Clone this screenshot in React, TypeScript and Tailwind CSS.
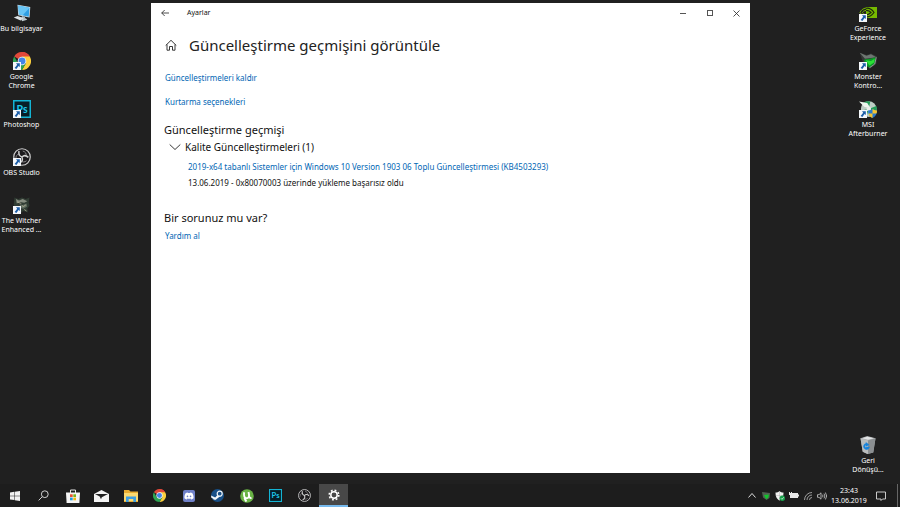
import { useState, type ReactNode } from 'react'
import { FaDiscord } from 'react-icons/fa'

const Chrome = ({ className }: { className?: string }) => (
  <svg viewBox="0 0 24 24" className={className}>
    <path d="M12 12 1.6 6A12 12 0 0 1 22.4 6Z" fill="#e0483a" />
    <path d="M12 0a12 12 0 0 1 10.4 6H12Z" fill="#e0483a" />
    <path d="M22.4 6A12 12 0 0 1 12 24l5.2-9L12 6Z" fill="#fbcf3c" />
    <path d="M1.6 6A12 12 0 0 0 12 24l5.2-9H6.8Z" fill="#2da453" />
    <circle cx="12" cy="12" r="5.8" fill="#f4f4f4" />
    <circle cx="12" cy="12" r="4.6" fill="#4285e8" />
  </svg>
)

const Photoshop = ({ className }: { className?: string }) => (
  <svg viewBox="0 0 24 24" className={className}>
    <rect x="1" y="1" width="22" height="22" fill="#071e27" stroke="#14b4d4" strokeWidth="2" />
    <text x="12" y="17" textAnchor="middle" fontSize="14" fontWeight="700" fontFamily="Lato, sans-serif" fill="#1cc8ec">
      Ps
    </text>
  </svg>
)

const Obs = ({ className }: { className?: string }) => (
  <svg viewBox="0 0 24 24" className={className} fill="none" stroke="#cfcfcf">
    <circle cx="12" cy="12" r="11" fill="#1c1a1d" strokeWidth="1.6" />
    <path d="M8 4c-.8 4 1 7 4 8M20.5 12.5c-3-2.8-6.3-2.8-8.5-.5M8.5 20c3.5-1.3 4.7-4.6 3.5-8" strokeWidth="2" />
    <path d="M13 4c3.5 1 5 3.5 4.5 6M18 17c-2.6 2.2-5.2 2-7.2.5M4 14c-.5-3 1.2-5.3 4-6" strokeWidth="0.8" />
  </svg>
)

const Computer = ({ className }: { className?: string }) => (
  <svg viewBox="0 0 24 24" className={className}>
    <path d="m6 1 17 3-1 14-15-3Z" fill="#d5e4ec" />
    <path d="m7 2 15 3-1 12-13-3Z" fill="#2f9fe4" />
    <path d="m7 2 15 3-9 10-5-1Z" fill="#69c5f5" />
    <path d="m12 16 4 1v3l-5-1Z" fill="#aab7be" />
    <path d="m1 18 5-2 9 3-5 3Z" fill="#dde3e6" />
    <path d="m11 20 6-1 2 2-7 2Z" fill="#bfc9ce" />
  </svg>
)

const Witcher = ({ className }: { className?: string }) => (
  <svg viewBox="0 0 24 24" className={className}>
    <path d="m2 2 5 2 5-2 5 2 5-2-1 6 1 5-3 4 1 5-6-2-3 2-4-3-4 1-2-9Z" fill="#303c33" />
    <path d="m4 4 4 2 5-2 6 3-4 2-6-1-4 2Z" fill="#868d80" />
    <path d="m9 11 4 1 5-2 1 4-5 3-4-1Z" fill="#5e6c5f" />
    <path d="m12 13 2 1 3-2M6 8l5 2M15 18l3 2" stroke="#bcb79a" fill="none" />
  </svg>
)

const MonsterHead = ({ className }: { className?: string }) => (
  <svg viewBox="0 0 24 24" className={className}>
    <path d="m1 1 9 3 6-2 8 4-1 10-8 6-8-4-3-8Z" fill="#343836" />
    <path d="m1 1 9 4 6-2 7 4-7 1-8 1Z" fill="#6e7672" />
    <path d="m7 10 8-1 7-2-1 8-7 6-6-4Z" fill="#099a25" />
    <path d="m9 11 7 1 5-3-1 5-6 4Z" fill="#2be036" />
    <path d="m23 7-2 9-7 5" stroke="#b0b6b2" fill="none" />
  </svg>
)

const Afterburner = ({ className }: { className?: string }) => (
  <svg viewBox="0 0 24 24" className={className}>
    <circle cx="13" cy="12" r="10.5" fill="#bdcdc4" />
    <path d="M13 12 5 4a11 11 0 0 1 10-2ZM13 12l10-4a11 11 0 0 1 0 8ZM13 12l-3 10a11 11 0 0 1-7-8Z" fill="#249d58" />
    <path d="m0 2 11 2 5 8-9-3Z" fill="#eef6ef" />
    <circle cx="13" cy="12" r="3" fill="#e9efeb" />
    <path d="M12 14c3 0 5-1 6-2 2 1 3 2 6 2 0 5-2 8-6 10-4-2-6-5-6-10Z" fill="#2879cf" />
    <path d="M18 12c2 1 3 2 6 2 0 2 0 3-1 4h-5v6c-3-1-5-3-5-6h5Z" fill="#f4c431" />
  </svg>
)

const Nvidia = ({ className }: { className?: string }) => (
  <svg viewBox="0 0 18 18" className={className}>
    <path d="M7 3h11v11H7Z" fill="#76b900" />
    <path d="M6 4.5c4-1 7 1 9 4-3 4-6 5-9 4M6 6.5c3-.5 4.5.5 6 2-2 2-3.5 3-6 2" fill="none" stroke="#1c2a0c" strokeWidth="1.2" />
    <path d="M7 4C4 4.5 2 6 1 8.5c1 2 3 3.5 6 4M7 6.5C5 6.5 4 7.5 3.5 8.5c.5 1.2 1.5 2 3.5 2" fill="none" stroke="#76b900" />
  </svg>
)

const RecycleBin = ({ className }: { className?: string }) => (
  <svg viewBox="0 0 24 24" className={className}>
    <path d="m2 3 9-3 11 3-3 19-8 2-6-3Z" fill="#a9acae" />
    <path d="m2 3 10 3v18l-7-3Z" fill="#b9bcbd" />
    <path d="m4 3 7-2 9 2-8 2Z" fill="#e2e4e5" />
    <path d="m22 3-3 19-7 2V6Z" fill="#8b8f91" />
    <path d="M11 11a3 3 0 1 0 1.5 4.5h-3" fill="none" stroke="#1683dc" strokeWidth="2.4" />
    <path d="m9 8 5 4-5 2Z" fill="#1683dc" />
  </svg>
)

const ShortcutArrow = () => (
  <svg viewBox="0 0 8 8" className="absolute bottom-0 left-0 size-2">
    <path d="M0 0h8v8H0Z" fill="#f5f8fb" />
    <path d="M3 1.3h3.8v3.8L5.5 4 3.4 6.9 1.6 6 4.2 2.7Z" fill="#1c5ea8" />
  </svg>
)

type Shortcut = { lines: string[]; icon: ReactNode; shortcut?: boolean }

const leftIcons: Shortcut[] = [
  { lines: ['Bu bilgisayar'], icon: <Computer className="size-full" /> },
  { lines: ['Google', 'Chrome'], icon: <Chrome className="size-full" />, shortcut: true },
  { lines: ['Photoshop'], icon: <Photoshop className="size-full" />, shortcut: true },
  { lines: ['OBS Studio'], icon: <Obs className="size-full" />, shortcut: true },
  { lines: ['The Witcher', 'Enhanced ...'], icon: <Witcher className="size-full" />, shortcut: true },
]

const rightIcons: Shortcut[] = [
  { lines: ['GeForce', 'Experience'], icon: <Nvidia className="size-full" />, shortcut: true },
  { lines: ['Monster', 'Kontro...'], icon: <MonsterHead className="size-full" />, shortcut: true },
  { lines: ['MSI', 'Afterburner'], icon: <Afterburner className="size-full" />, shortcut: true },
]

function DesktopIcon({ lines, icon, shortcut }: Shortcut) {
  return (
    <button className="flex h-12 w-full flex-col items-center gap-0.5 pt-1 text-[7px] leading-[9px] text-white">
      <span className="relative block size-[18px] shrink-0">
        {icon}
        {shortcut && <ShortcutArrow />}
      </span>
      <span className="whitespace-nowrap">
        {lines.map((line) => (
          <span key={line} className="block">
            {line}
          </span>
        ))}
      </span>
    </button>
  )
}

function SettingsWindow() {
  const [open, setOpen] = useState(true)

  return (
    <main className="mt-[3px] mb-[11px] flex flex-1 flex-col bg-white text-[#111]">
      <header className="flex h-5 items-center">
        <button aria-label="Geri" className="flex w-7 justify-center">
          <svg viewBox="0 0 8 8" className="size-2" fill="none" stroke="#222" strokeWidth="0.8">
            <path d="M8 4H.7M3.7 1l-3 3 3 3" />
          </svg>
        </button>
        <span className="ml-2 text-[7px]">Ayarlar</span>
        <div className="ml-auto flex">
          <button aria-label="Simge durumuna küçült" className="flex h-5 w-[27px] items-center justify-center">
            <span className="h-px w-1.5 bg-[#555]" />
          </button>
          <button aria-label="Ekranı kapla" className="flex h-5 w-[27px] items-center justify-center">
            <span className="size-1.5 border border-[#555]" />
          </button>
          <button aria-label="Kapat" className="flex h-5 w-[27px] items-center justify-center">
            <svg viewBox="0 0 7 7" className="size-[7px]" stroke="#222" strokeWidth="0.8">
              <path d="m.5.5 6 6m0-6-6 6" />
            </svg>
          </button>
        </div>
      </header>

      <div className="px-[13px] pt-2.5">
        <div className="flex h-6 items-center gap-3">
          <button aria-label="Giriş" className="ml-px">
            <svg viewBox="0 0 12 12" className="size-3" fill="none" stroke="#222" strokeWidth="0.9">
              <path d="M.7 6.5 6 1.3l5.3 5.2M2 5.5v5.7h2.5V7.5h3v3.7H10V5.5" />
            </svg>
          </button>
          <h1 className="text-[15px] leading-6 text-[#222]">Güncelleştirme geçmişini görüntüle</h1>
        </div>

        <nav className="mt-[13px] ml-px flex flex-col items-start gap-2 text-[8px] leading-4 text-[#0066b4]">
          <a href="#kaldir">Güncelleştirmeleri kaldır</a>
          <a href="#kurtarma">Kurtarma seçenekleri</a>
        </nav>

        <section className="mt-3">
          <h2 className="text-[11px] leading-4">Güncelleştirme geçmişi</h2>
          <button
            aria-expanded={open}
            onClick={() => setOpen(!open)}
            className="mt-px ml-[5px] flex items-center gap-1 text-[10px] leading-4"
          >
            <svg viewBox="0 0 12 12" className="size-3" fill="none" stroke="#222" strokeWidth="0.9">
              <path d="m.7 3.5 5.3 5 5.3-5" />
            </svg>
            Kalite Güncelleştirmeleri (1)
          </button>
          {open && (
            <div className="mt-1 ml-6 text-[8px] leading-4">
              <a href="#kb4503293" className="block text-[#0066b4]">
                2019-x64 tabanlı Sistemler için Windows 10 Version 1903 06 Toplu Güncelleştirmesi (KB4503293)
              </a>
              <p>13.06.2019 - 0x80070003 üzerinde yükleme başarısız oldu</p>
            </div>
          )}
        </section>

        <section className="mt-[19px]">
          <h2 className="text-[11px] leading-4">Bir sorunuz mu var?</h2>
          <a href="#yardim" className="mt-0.5 ml-px block text-[8px] leading-4 text-[#0066b4]">
            Yardım al
          </a>
        </section>
      </div>
    </main>
  )
}

const taskbarApps: { name: string; icon: ReactNode; active?: boolean }[] = [
  {
    name: 'Başlat',
    icon: (
      <svg viewBox="0 0 10 10" className="size-2.5" fill="#f2f2f2">
        <path d="M0 1.4 4.3.8v3.9H0ZM4.8.7 10 0v4.7H4.8ZM0 5.2h4.3v3.9L0 8.5ZM4.8 5.2H10V10l-5.2-.8Z" />
      </svg>
    ),
  },
  {
    name: 'Ara',
    icon: (
      <svg viewBox="0 0 11 11" className="size-[11px]" fill="none" stroke="#d0d0d0">
        <circle cx="6.8" cy="4.2" r="3.4" />
        <path d="M4.3 6.7.6 10.4" />
      </svg>
    ),
  },
  {
    name: 'Microsoft Store',
    icon: (
      <svg viewBox="0 0 14 14" className="size-3.5">
        <path d="M4.5 4V1h5v3" fill="none" stroke="#e8e8e8" />
        <path d="M0 3.5h14L13.4 14H.6Z" fill="#f4f4f4" />
        <path d="M4 5.3h2.7V8H4Z" fill="#e8502e" />
        <path d="M7.3 5.3H10V8H7.3Z" fill="#78b41c" />
        <path d="M4 8.6h2.7v2.7H4Z" fill="#1c9be0" />
        <path d="M7.3 8.6H10v2.7H7.3Z" fill="#f5b813" />
      </svg>
    ),
  },
  {
    name: 'Posta',
    icon: (
      <svg viewBox="0 0 15 12" className="h-3 w-[15px]">
        <path d="M0 4 7.5 0 15 4v8H0Z" fill="#f5f5f5" />
        <path d="M1 4h13L7.8 7.3l-.8 2-1.3-2.8Z" fill="#202020" />
      </svg>
    ),
  },
  {
    name: 'Dosya Gezgini',
    icon: (
      <svg viewBox="0 0 14 12" className="h-3 w-3.5">
        <path d="M0 0h5l1.5 1.5H14V12H0Z" fill="#e9ad32" />
        <path d="M0 3h14v8H0Z" fill="#fbd970" />
        <path d="M2 6.5h10V12H9.3V9H4.7v3H2Z" fill="#3e9fe0" />
      </svg>
    ),
  },
  { name: 'Google Chrome', icon: <Chrome className="size-[13px]" /> },
  {
    name: 'Discord',
    icon: (
      <span className="flex size-3 items-center justify-center rounded-xs bg-[#6f80c8]">
        <FaDiscord className="size-2.5 text-white" />
      </span>
    ),
  },
  {
    name: 'Steam',
    icon: (
      <svg viewBox="0 0 13 13" className="size-[13px]">
        <circle cx="6.5" cy="6.5" r="6.5" fill="#174f87" />
        <path d="m0 6.5 4.2 2 3-3.2 2 2-3.6 2.6A2 2 0 0 1 2 9.5L.4 8.8Z" fill="#f3f6f8" />
        <circle cx="8.7" cy="4.7" r="2.5" fill="#174f87" stroke="#f3f6f8" strokeWidth="1.2" />
      </svg>
    ),
  },
  {
    name: 'µTorrent',
    icon: (
      <svg viewBox="0 0 14 14" className="size-3.5">
        <circle cx="7" cy="7" r="6.8" fill="#69b345" />
        <path
          d="M4.2 3.2c-.6 3 0 6 2.3 6 2 0 2.8-1.5 2.5-3.5L8.5 3M9 6.5c.2 2 1 2.8 2.5 2.5M4.5 8.5c.3 2 1 3 2 4"
          fill="none"
          stroke="#fff"
          strokeWidth="1.9"
        />
      </svg>
    ),
  },
  { name: 'Photoshop', icon: <Photoshop className="size-[13px]" /> },
  { name: 'OBS Studio', icon: <Obs className="size-[13px]" /> },
  {
    name: 'Ayarlar',
    active: true,
    icon: (
      <svg viewBox="0 0 12 12" className="size-3" fill="none" stroke="#fff">
        <circle cx="6" cy="6" r="3.2" strokeWidth="1.5" />
        <circle cx="6" cy="6" r="4.8" strokeWidth="1.6" strokeDasharray="1.8 1.97" />
      </svg>
    ),
  },
]

function Taskbar() {
  return (
    <footer className="flex h-[23px] items-stretch bg-[#1d1d1d] text-white">
      {taskbarApps.map((app) => (
        <button
          key={app.name}
          aria-label={app.name}
          className={`flex w-[29px] items-center justify-center ${
            app.active ? 'border-b-2 border-[#76b9ed] bg-[#484848]' : ''
          }`}
        >
          {app.icon}
        </button>
      ))}

      <div className="ml-auto flex items-center">
        <button aria-label="Gizli simgeleri göster" className="flex w-[14px] justify-center">
          <svg viewBox="0 0 8 5" className="h-[5px] w-2" fill="none" stroke="#ddd">
            <path d="m.5 4.5 3.5-4 3.5 4" />
          </svg>
        </button>
        <button aria-label="Monster" className="flex w-[14px] justify-center">
          <svg viewBox="0 0 8 8" className="size-2">
            <path d="m0 0 4 .5L8 1 7.5 6 4.5 8 1 5.5Z" fill="#516152" />
            <path d="m2 3 5-.5-1 3.5-2 1Z" fill="#12c52c" />
          </svg>
        </button>
        <button aria-label="Windows Güvenliği" className="flex w-[14px] justify-center">
          <svg viewBox="0 0 10 10" className="size-2.5">
            <path d="M.5 1.5C2 1.5 3.5 1 4.5 0 5.5 1 7 1.5 8.5 1.5 8.5 6 7 8 4.5 9.5 2 8 .5 6 .5 1.5Z" fill="#f2f2f2" />
            <path d="M4.5 0v9M.5 4.5h8" stroke="#8d8d8d" strokeWidth="0.3" />
            <circle cx="7.3" cy="7.3" r="2.7" fill="#18a04a" />
            <path d="m6 7.3 1 1 1.7-2" stroke="#fff" strokeWidth="0.7" fill="none" />
          </svg>
        </button>
        <button aria-label="Pil" className="flex w-[14px] justify-center">
          <svg viewBox="0 0 10 7" className="h-[7px] w-2.5" fill="#e8e8e8">
            <path d="M2 1h7v1.5h1v2H9V6H2Z" />
            <path d="M0 0h1v1h1V0h1v3H2v3H1V3H0Z" />
          </svg>
        </button>
        <button aria-label="Ağ" className="flex w-[14px] justify-center">
          <svg viewBox="0 0 8 8" className="size-2" fill="none" stroke="#aaa" strokeWidth="0.9">
            <path d="M.5 8A7.5 7.5 0 0 1 8 .5M3 8a5 5 0 0 1 5-5M5.5 8A2.5 2.5 0 0 1 8 5.5" />
          </svg>
        </button>
        <button aria-label="Ses" className="flex w-[14px] justify-center">
          <svg viewBox="0 0 10 8" className="h-2 w-2.5" fill="none" stroke="#ccc" strokeWidth="0.8">
            <path d="M.5 2.7H2L4 .8v6.4L2 5.3H.5ZM5.5 2.7q1 1.3 0 2.6M7 1.6q1.8 2.4 0 4.8M8.4.5q2.6 3.5 0 7" />
          </svg>
        </button>
        <button className="flex w-10 flex-col items-center text-[7px] leading-[10px]">
          <span>23:43</span>
          <span>13.06.2019</span>
        </button>
        <button aria-label="Bildirimler" className="flex w-6 justify-center">
          <svg viewBox="0 0 10 10" className="size-2.5" fill="none" stroke="#ddd" strokeWidth="0.9">
            <path d="M.5 1h9v7h-3L5 9.5V8H.5Z" />
          </svg>
        </button>
        <span className="ml-1 h-full w-[3px] border-l border-[#666]" />
      </div>
    </footer>
  )
}

export default function App() {
  return (
    <div className="flex min-h-screen flex-col bg-[#202020] font-['Noto_Sans','Open_Sans',sans-serif]">
      <div className="flex flex-1">
        <aside className="w-[151px] shrink-0">
          <div className="w-[43px]">
            {leftIcons.map((item) => (
              <DesktopIcon key={item.lines[0]} {...item} />
            ))}
          </div>
        </aside>

        <SettingsWindow />

        <aside className="flex w-[150px] shrink-0 justify-end">
          <div className="flex w-16 flex-col justify-between pb-1">
            <div>
              {rightIcons.map((item) => (
                <DesktopIcon key={item.lines[0]} {...item} />
              ))}
            </div>
            <DesktopIcon lines={['Geri', 'Dönüşü...']} icon={<RecycleBin className="size-full" />} />
          </div>
        </aside>
      </div>
      <Taskbar />
    </div>
  )
}
